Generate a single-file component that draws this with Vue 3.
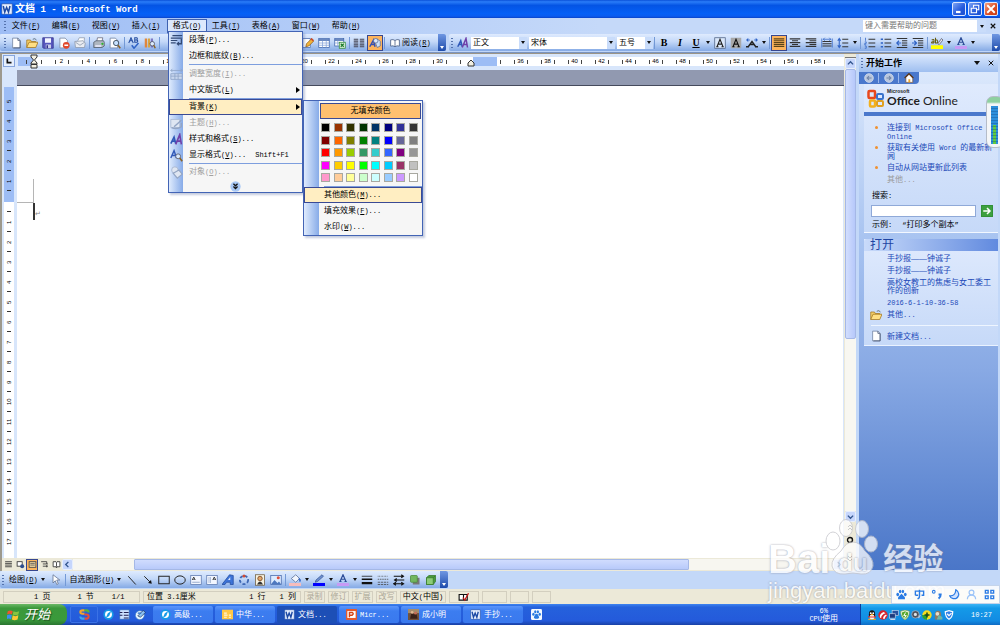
<script setup>
import { h } from 'vue'

/* Mixed text: Chinese runs and Latin runs get their own face; "_X" marks an access key. */
const T = ({ s }) =>
  h('span', { class: 'tx' }, s.match(/[\u2014\u2e80-\uffef]+|[^\u2014\u2e80-\uffef]+/g).map((run) => {
    if (/[\u2014\u2e80-\uffef]/.test(run)) return run
    const i = run.indexOf('_')
    if (i < 0) return h('span', { class: 'lat' }, run)
    return h('span', { class: 'lat' }, [run.slice(0, i), h('u', run[i + 1]), run.slice(i + 2)])
  }))
T.props = ['s']

const menus = ['文件(_F)', '编辑(_E)', '视图(_V)', '插入(_I)', '格式(_O)', '工具(_T)', '表格(_A)', '窗口(_W)', '帮助(_H)']

const lines = (a, x = 1, w = 14, c = '#333') => a.map((y) => `<path d="M${x} ${y}h${w}" stroke="${c}" stroke-width="1.5"/>`).join('')
const icons = {
  word: '<rect x="1" y="1" width="14" height="14" rx="1" fill="#e8f0ff" stroke="#2a54a8"/><path d="M3 4l2 8 2.500-6 2.500 6 2-8" fill="none" stroke="#1d4aa5" stroke-width="2"/>',
  new: '<path d="M3.500 1.500h7l3 3v10h-10z" fill="#fff" stroke="#6e7f9e"/><path d="M10.500 1.500v3h3M13.500 5v9.500h-9" fill="none" stroke="#3e4d6c"/>',
  open: '<path d="M1 14V4h5l1 2h6v3" fill="#f4cf6a" stroke="#a3741b"/><path d="M1 14l3-7h12l-3 7z" fill="#ffdf84" stroke="#a3741b"/><path d="M9 3q3-2 5 1" fill="none" stroke="#456" />',
  save: '<path d="M1 1h14v14H2l-1-1z" fill="#5757bd" stroke="#30308c"/><path d="M4 1.500h8v6H4z" fill="#f3f5ff"/><path d="M5 10h7v5H5z" fill="#c9cde8"/><path d="M6 11h2v4H6z" fill="#30308c"/>',
  perm: '<path d="M2.500 1.500h7l3 3v10h-10z" fill="#fff" stroke="#78859e"/><circle cx="11" cy="11" r="4.500" fill="#e2482b"/><path d="M8.500 11h5" stroke="#fff" stroke-width="2"/>',
  mail: '<path d="M5 5l2-4h7l-1 8" fill="#fff" stroke="#8b95a8"/><path d="M1 6l11-1 3 3-1 6H2z" fill="#e9ecf2" stroke="#8b95a8"/><path d="M2 7l6 4 6-4" fill="none" stroke="#8b95a8"/>',
  print: '<path d="M5 6l1-5h7l-1 5" fill="#fff" stroke="#667"/><path d="M1 7l3-2h10l1 2v5l-3 2H1z" fill="#aeb6c0" stroke="#4e5866"/><path d="M3 11h8v2H3z" fill="#eef"/><circle cx="12.500" cy="9" r="1.500" fill="#2db52d"/>',
  preview: '<path d="M1.500 1.500h7l3 3v10h-10z" fill="#fff" stroke="#6e7f9e"/><circle cx="9.500" cy="8" r="3.500" fill="#c8e2ff" stroke="#456" stroke-width="1.300"/><path d="M12 11l3 4" stroke="#8c6425" stroke-width="2"/>',
  spell: '<path d="M1 8l3-7 3 7M2 5h4M9 1v6h3q2-1.500 0-3H9h2.500q2-2 0-3z" fill="none" stroke="#234ca0" stroke-width="1.400"/><path d="M5 11l3 4 6-7" fill="none" stroke="#2f63c6" stroke-width="2"/>',
  research: '<path d="M1 2h3v12H1z" fill="#e0863c"/><path d="M5 2h3v12H5z" fill="#d9a441"/><path d="M9 2h3v12H9z" fill="#7d78c4"/><circle cx="11" cy="9" r="3" fill="#dcecff" stroke="#445"/><path d="M13 11l2 4" stroke="#8c6425" stroke-width="2"/>',
  edit: '<path d="M1 2h10v12H1z" fill="#fff" stroke="#4667a8"/><path d="M5 13l1-4 7-7 3 3-7 7z" fill="#f1b33a" stroke="#8c5b16"/><path d="M12 2l3 3" stroke="#d0432e" stroke-width="2"/>',
  table: '<rect x="1" y="2" width="14" height="12" fill="#fff" stroke="#3a62ab"/><path d="M1 3h14v2H1z" fill="#3a62ab"/><path d="M1 8h14M1 11h14M6 5v9M11 5v9" stroke="#86a4da"/>',
  excel: '<rect x="1" y="2" width="12" height="10" fill="#fff" stroke="#3a62ab"/><path d="M1 3h12v2H1z" fill="#3a62ab"/><path d="M1 8h12M5 5v7" stroke="#86a4da"/><rect x="7" y="7" width="8" height="8" fill="#dff2dc" stroke="#2c8a35"/><path d="M9 9l4 4M13 9l-4 4" stroke="#1c7a28" stroke-width="1.600"/>',
  cols: lines([3, 5.5, 8, 10.5, 13], 1, 6, '#445') + lines([3, 5.5, 8, 10.5, 13], 9, 6, '#445'),
  draw: '<path d="M1 13L6 4l2 9M3 10h5" fill="none" stroke="#324fb5" stroke-width="2"/><path d="M8 3h4l3 3v6l-4 2-2-5z" fill="#cfe0f6" stroke="#536c9b"/><circle cx="9" cy="5" r="3" fill="#dfe7f8" stroke="#536c9b"/>',
  book: '<path d="M8 4Q5 1.500 1 3v10q4-1.500 7 1 3-2.500 7-1V3q-4-1.500-7 1v10" fill="#fff" stroke="#4a5f86" stroke-width="1.300"/>',
  style: '<path d="M1 13L5 5l2 8M3 10h4" fill="none" stroke="#2f58b8" stroke-width="2"/><path d="M7 14l5-12 2 12M9 10h5" fill="none" stroke="#6f3fa8" stroke-width="2"/>',
  charA: '<rect x="1" y="1" width="14" height="14" fill="#dbe8fb" stroke="#4c5f80"/><path d="M4 13l4-10 4 10M5.500 9.500h5M3 13h3M10 13h3" fill="none" stroke="#222" stroke-width="1.500"/>',
  shadeA: '<rect x="1" y="1" width="14" height="14" fill="#a8a8a8"/><path d="M4 13l4-10 4 10M5.500 9.500h5M3 13h3M10 13h3" fill="none" stroke="#111" stroke-width="1.500"/>',
  scale: '<path d="M3 13l5-7 5 7M5 10h6M0 13h4M12 13h4" fill="none" stroke="#222" stroke-width="1.800"/><path d="M1 4h4M11 4h4M3 2L1 4l2 2M13 2l2 2-2 2" fill="none" stroke="#2f63c6" stroke-width="1.400"/>',
  just: lines([2.5, 5, 7.5, 10, 12.5], 1, 14, '#5b4418'),
  center: lines([2.5, 7.5, 12.5]) + lines([5, 10], 4, 8),
  right: lines([2.5, 7.5, 12.5]) + lines([5, 10], 6, 9),
  dist: '<path d="M1 2v12M15 2v12" stroke="#2f63c6"/>' + lines([6, 9, 12], 2, 12) + '<path d="M3 3h10M5 1L3 3l2 2M11 1l2 2-2 2" fill="none" stroke="#2f63c6"/>',
  spacing: lines([3, 8, 13], 7, 8) + '<path d="M3 2v12M1 5l2-3 2 3M1 11l2 3 2-3" fill="none" stroke="#2f63c6" stroke-width="1.400"/>',
  numlist: lines([3, 8, 13], 6, 9) + '<path d="M2 1v4M1 6.500h2v2H1v2h2M1 12h2v3H1" fill="none" stroke="#2f63c6"/>',
  bullist: lines([3, 8, 13], 6, 9) + '<path d="M1 2h3v2H1zM1 7h3v2H1zM1 12h3v2H1z" fill="#2f63c6"/>',
  outdent: lines([2, 14]) + lines([5, 8, 11], 8, 7) + '<path d="M7 8H1M4 5L1 8l3 3" fill="none" stroke="#2f63c6" stroke-width="1.600"/>',
  indent: lines([2, 14]) + lines([5, 8, 11], 8, 7) + '<path d="M0 8h6M3 5l3 3-3 3" fill="none" stroke="#2f63c6" stroke-width="1.600"/>',
  hilite: '<path d="M0 11h16v5H0z" fill="#ff0"/><path d="M1 4q3-2 3 1v3M4 6Q0 6 1 8h3M6 1v7h2q2-2 0-4H6" fill="none" stroke="#665d10" stroke-width="1.400"/><path d="M9 9l5-7 2 2-5 6z" fill="#e5e9f0" stroke="#556"/>',
  fontA: '<path d="M0 12h16v4H0z" fill="#c79af5"/><path d="M4 10l4-9 4 9M5.500 7h5M3 10h3M10 10h3" fill="none" stroke="#2c4c97" stroke-width="1.600"/>',
  para: '<path d="M3 2h12M1 5h14M1 8h8M1 11h6" stroke="#334a75" stroke-width="1.500"/><path d="M14 6v6H9M11 10l-2 2 2 2" fill="none" stroke="#334a75" stroke-width="1.600"/>',
  adj: '<path d="M1 3h14M3 1L1 3l2 2M13 1l2 2-2 2" fill="none" stroke="#8ea4c8"/><path d="M1 7h14v7H1zM1 10h14M6 7v7M10 7v7" fill="#c7d6ee" stroke="#8ea4c8"/>',
  theme: '<path d="M1 3h11v10H1z" fill="#dfe6f2" stroke="#a9b8d2"/><path d="M5 12l9-8M2 13q6 3 12-1V7" fill="none" stroke="#93a5c4" stroke-width="1.800"/>',
  reveal: '<path d="M1 11L5 2l3 9M2 8h5" fill="none" stroke="#315ab9" stroke-width="1.800"/><circle cx="10" cy="9" r="3" fill="#d6e7fc" stroke="#556"/><path d="M12 11l3 4" stroke="#8c6425" stroke-width="2"/>',
  object: '<circle cx="6" cy="5" r="4" fill="#dfe6f2" stroke="#a3b3cf"/><path d="M4 9l7-4 4 5-6 5z" fill="#dfe6f2" stroke="#93a5c4" stroke-width="1.400"/>',
  cursor: '<path d="M4 1v11l3-3 2 5 2-1-2-5h4z" fill="#fff" stroke="#5d6d8c"/>',
  line: '<path d="M3 3l10 11" stroke="#222" stroke-width="1.300"/>',
  arrow: '<path d="M3 3l8 8" stroke="#222" stroke-width="1.300"/><path d="M13 13l-5-1 4-4z" fill="#111"/>',
  rect: '<rect x="1" y="3" width="14" height="10" fill="none" stroke="#222" stroke-width="1.300"/>',
  oval: '<ellipse cx="8" cy="8" rx="7" ry="5.500" fill="none" stroke="#222" stroke-width="1.300"/>',
  textbox: '<rect x="1" y="2" width="14" height="12" fill="#f2f6ff" stroke="#5b77ad"/><path d="M3 8l2-4 2 4M3.500 7h3" fill="none" stroke="#222"/>' + lines([11], 3, 10, '#9aaccc'),
  vtextbox: '<rect x="1" y="2" width="14" height="12" fill="#f2f6ff" stroke="#5b77ad"/><path d="M9 8l2-4 2 4M9.500 7h3" fill="none" stroke="#222"/><path d="M4 4v8M6 4v8" stroke="#9aaccc"/>',
  wordart: '<path d="M0 14L10 1l5 1v12h-4v-3H6l-2 3z" fill="#3d74d8" stroke="#204a9d"/><path d="M8 8l3-4v4z" fill="#dce9ff"/>',
  diagram: '<circle cx="8" cy="8" r="5.500" fill="none" stroke="#3e68b5" stroke-width="2.500" stroke-dasharray="4 2.500"/><circle cx="8" cy="2.500" r="2" fill="#d24b33"/>',
  clip: '<rect x="2" y="1" width="12" height="14" fill="#f6f2e0" stroke="#6b5a3b"/><circle cx="8" cy="6" r="3" fill="#e3a66a" stroke="#6b3a16"/><path d="M4 14q4-8 8 0z" fill="#333"/>',
  pic: '<rect x="1" y="2" width="14" height="12" fill="#dcebff" stroke="#4667a8"/><path d="M1 14l5-6 4 4 2-2 3 4z" fill="#4d78bf"/><circle cx="11" cy="5" r="2" fill="#e04f39"/>',
  fill: '<path d="M0 12h16v4H0z" fill="#f6bcbc"/><path d="M3 6l6-5 5 5-5 5z" fill="#f1f5fc" stroke="#556c96"/><path d="M13 6q3 2 1 4" fill="none" stroke="#2f63c6" stroke-width="2"/>',
  linecolor: '<path d="M0 12h16v4H0z" fill="#00f"/><path d="M3 11l1-3 8-7 2 2-8 7z" fill="#6c8fd0" stroke="#3d5a94"/>',
  thick: '<path d="M1 3h14" stroke="#111"/><path d="M1 7h14" stroke="#111" stroke-width="2"/><path d="M1 12h14" stroke="#111" stroke-width="3"/>',
  dash: '<path d="M1 3h14" stroke="#444" stroke-dasharray="1 1"/><path d="M1 7h14" stroke="#444" stroke-dasharray="2 1"/><path d="M1 11h14M1 14h14" stroke="#444" stroke-dasharray="3 1"/>',
  arrows: '<path d="M1 3h12M3 8h12M1 13h14M11 1l3 2-3 2M5 6L2 8l3 2M11 11l3 2-3 2M4 11l-3 2 3 2" fill="none" stroke="#111" stroke-width="1.400"/>',
  shadow: '<rect x="5" y="5" width="9" height="9" fill="#777"/><rect x="2" y="2" width="9" height="9" rx="1" fill="#72b75e" stroke="#4a8a3b"/>',
  cube: '<path d="M2 5l3-3h9v8l-3 4H2z" fill="#4a9a3d" stroke="#357a2a"/><path d="M2 5h9v9H2z" fill="#8ccc78" stroke="#357a2a"/><path d="M11 5l3-3" stroke="#357a2a"/>',
  vNormal: lines([3, 6, 9, 12], 2, 12, '#333'),
  vWeb: '<rect x="2" y="3" width="9" height="8" fill="#fff" stroke="#333" stroke-width="1.500"/><circle cx="11" cy="11" r="3.500" fill="#2d4d8f"/>',
  vPage: '<rect x="2" y="3" width="12" height="10" fill="#f5d9a4" stroke="#444" stroke-width="1.500"/>' + lines([6, 9], 4, 8, '#555'),
  vOut: '<path d="M2 3h10v4M5 7h9M5 11h9M12 9v4" fill="none" stroke="#333" stroke-width="1.500"/>',
  vRead: '<path d="M2 3h5l1 1 1-1h5v9H9l-1 2-1-2H2zM8 4v8" fill="#fff" stroke="#333" stroke-width="1.500"/>',
  back: '<circle cx="8" cy="8" r="7" fill="#b9c6dd" stroke="#e6ecf6"/><path d="M12 8H5M8 5L5 8l3 3" fill="none" stroke="#7185a8" stroke-width="1.800"/>',
  fwd: '<circle cx="8" cy="8" r="7" fill="#b9c6dd" stroke="#e6ecf6"/><path d="M4 8h7M8 5l3 3-3 3" fill="none" stroke="#7185a8" stroke-width="1.800"/>',
  home: '<path d="M2 8l6-6 6 6v7H3V8" fill="#fff" stroke="#7c4a1e"/><path d="M1 8l7-7 7 7" fill="none" stroke="#5d3413" stroke-width="2"/><path d="M7 10h3v5H7z" fill="#f0a830"/>',
  go: '<rect x="0" y="0" width="16" height="16" rx="1" fill="#3da03f" stroke="#1f7a2a"/><path d="M3 8h9M8 4l4 4-4 4" fill="none" stroke="#fff" stroke-width="2"/>',
  proof: '<path d="M1 4h7v9H1zM8 4h6v9H8z" fill="#fff" stroke="#111" stroke-width="1.800"/><path d="M7 9l3 4 6-11" fill="none" stroke="#c51616" stroke-width="2"/>',
  winflag: '<path d="M1 4q3-2 6 0L6 8Q3 6 0 8z" fill="#f0562d"/><path d="M8 4q3 2 7 0l-1 4q-4 2-7 0z" fill="#86c440"/><path d="M0 9q3-2 6 0l-1 5q-3-2-6 0z" fill="#3a8ff0"/><path d="M7 9q3 2 7 0l-1 5q-4 2-7 0z" fill="#fcc833"/>',
  sbrand: '<g fill="none" stroke-width="3"><path d="M8 2H5Q2 2 2 4.500T5 7h3" stroke="#f2a52c"/><path d="M8 2h3q3 0 3 3" stroke="#5ab336"/><path d="M8 8h3q3 0 3 3t-3 3H8" stroke="#e44f36"/><path d="M8 14H5q-3 0-3-3" stroke="#3fa7ea"/></g>',
  compass: '<circle cx="8" cy="8" r="7.500" fill="#159be8"/><circle cx="8" cy="8" r="5" fill="#fff"/><path d="M12 3L9 10l-5 3 3-7z" fill="#159be8"/>',
  desk: '<path d="M1 1h14v14H1z" fill="#cde2ff" stroke="#2563b8"/><path d="M1 5h4M1 9h4M7 5h7M7 9h7M7 13h7" stroke="#225" stroke-width="1.500"/>',
  outlook: '<circle cx="7" cy="9" r="6.500" fill="#e8f4ff" stroke="#3879c7"/><path d="M4 10l8-8 3 3-7 7z" fill="#8cc2f2" stroke="#235"/><path d="M4 6h5" stroke="#2f74c8" stroke-width="2"/>',
  folder: '<path d="M0 1h16v14H0z" fill="#ffc845"/><path d="M3 6h4M3 9h5M3 12h4M10 9h3M10 12h3" stroke="#fff8e0" stroke-width="1.800"/>',
  ppt: '<rect width="16" height="16" rx="1" fill="#e35a2c"/><rect x="2" y="3" width="12" height="10" fill="#fff"/><path d="M5 12V5h4q3 2 0 4H5" fill="none" stroke="#d34317" stroke-width="2"/>',
  photo: '<rect width="16" height="16" fill="#70513b"/><path d="M0 0h16v6H0z" fill="#a58b6a"/><path d="M3 14l2-9 4 3 3-3 2 9z" fill="#3a2118"/><circle cx="6" cy="5" r="2" fill="#e2b58e"/><circle cx="11" cy="6" r="2" fill="#c56d58"/>',
  paw: '<rect width="16" height="16" rx="2" fill="#f4f9ff"/><ellipse cx="3.500" cy="7.500" rx="1.700" ry="2.200" fill="#2a7be0"/><ellipse cx="6.200" cy="4" rx="1.600" ry="2.200" fill="#2a7be0"/><ellipse cx="10" cy="4" rx="1.600" ry="2.200" fill="#2a7be0"/><ellipse cx="12.700" cy="7.500" rx="1.700" ry="2.200" fill="#2a7be0"/><path d="M8 7q2 0 3 3 2 3-1 4H6q-3-1-1-4 1-3 3-3z" fill="#2a7be0"/>',
  qq: '<ellipse cx="8" cy="7" rx="5" ry="6.500" fill="#151515"/><ellipse cx="8" cy="11" rx="4" ry="4" fill="#fff"/><path d="M2 9q6 3 12 0v3H2z" fill="#e32222"/><circle cx="6" cy="5" r="1.500" fill="#fff"/><circle cx="10" cy="5" r="1.500" fill="#fff"/><path d="M2 15h5M9 15h5M6 7.500h4" stroke="#f7a51c" stroke-width="2"/>',
  redball: '<circle cx="8" cy="8" r="7.500" fill="#d8232d"/><path d="M3 12Q2 6 9 3l3 2Q5 7 5 13zM8 14q0-5 5-7l1 2q-3 1-3 5z" fill="#fff"/>',
  net: '<rect x="5" y="1" width="10" height="8" fill="#28509c" stroke="#cfd8ea"/><rect x="1" y="6" width="9" height="7" fill="#1d3b7e" stroke="#cfd8ea"/><path d="M2 15h8" stroke="#cfd8ea" stroke-width="2"/>',
  shield: '<path d="M8 0l7 2q0 10-7 14Q1 12 1 2z" fill="#f4f7e8" stroke="#7da13a"/><path d="M8 2l5 2q0 7-5 10-5-3-5-10z" fill="#58a82c"/><path d="M9 4L6 9h4l-3 4" fill="none" stroke="#fff" stroke-width="1.600"/>',
  sound: '<circle cx="7" cy="7" r="6" fill="#4c535e" stroke="#b9c1cd"/><circle cx="7" cy="7" r="2.500" fill="#dde3ea"/><path d="M12 13l3-5" stroke="#c0c8d8" stroke-width="2"/>',
  plus: '<circle cx="8" cy="8" r="7.500" fill="#f6dd1e"/><path d="M0 8a8 8 0 008 8V8z" fill="#2aa135"/><path d="M8 4v8M4 8h8" stroke="#174b1c" stroke-width="2.500"/>',
  bird: '<path d="M3 15V8q0-7 5-7t5 7v7z" fill="#8f7b63"/><circle cx="7" cy="6" r="3" fill="#e9dccb"/><path d="M6 15l3-7 6 3v4z" fill="#6fb6a8"/>',
  vcheck: '<path d="M8 0l7 2q0 10-7 14Q1 12 1 2z" fill="#fff"/><path d="M8 2l5 1.500q0 7-5 10-5-3-5-10z" fill="#2f80e8"/><path d="M5 6l3 3 4-4" fill="none" stroke="#fff" stroke-width="2"/>',
  imePaw: '<ellipse cx="2.500" cy="8" rx="2" ry="2.500" fill="#2b7be4"/><ellipse cx="6" cy="3.500" rx="1.800" ry="2.500" fill="#2b7be4"/><ellipse cx="10" cy="3.500" rx="1.800" ry="2.500" fill="#2b7be4"/><ellipse cx="13.500" cy="8" rx="2" ry="2.500" fill="#2b7be4"/><path d="M8 7l5 5v3H3v-3z" fill="#2b7be4"/>',
  imeMid: '<path d="M2 9V3h12v6h-3M2 9h4M8 1v9q0 4-3 4" fill="none" stroke="#2b7be4" stroke-width="2"/>',
  imeDot: '<circle cx="4" cy="4" r="2" fill="none" stroke="#2b7be4" stroke-width="1.500"/><path d="M11 8h3q0 4-3 6" fill="none" stroke="#2b7be4" stroke-width="3"/>',
  imeMoon: '<path d="M10 1q5 3 4 8-2 6-8 5-4-1-5-4 8 1 9-9z" fill="#cfe2ff" stroke="#2b7be4" stroke-width="1.800"/>',
  imeUser: '<circle cx="8" cy="5" r="3.500" fill="none" stroke="#9cc4f8" stroke-width="1.800"/><path d="M2 15q0-6 6-6t6 6" fill="none" stroke="#9cc4f8" stroke-width="1.800"/>',
  imeGrid: '<path d="M2 2h4v4H2zM10 2h4v4h-4zM2 10h4v4H2zM10 10h4v4h-4z" fill="none" stroke="#2b7be4" stroke-width="2"/>',
}

const stdA = ['new', 'open', 'save', 'perm', 'mail', '|', 'print', 'preview', '|', 'spell', 'research', '|']
const stdB = ['edit', 'table', 'excel', '|', 'cols', 'draw*', '|']
const fmt = ['charA', 'shadeA', 'scale', 'v', '|', 'just*', 'center', 'right', 'dist', 'spacing', 'v', '|', 'numlist', 'bullist', 'outdent', 'indent', '|', 'hilite', 'v', 'fontA', 'v']
const drawing = ['line', 'arrow', 'rect', 'oval', 'textbox', 'vtextbox', 'wordart', 'diagram', 'clip', 'pic', '|', 'fill', 'v', 'linecolor', 'v', 'fontA', 'v', 'thick', 'dash', 'arrows', 'shadow', 'cube']
const fonts = [['样式', '正文', 'c1'], ['字体', '宋体', 'c2'], ['字号', '五号', 'c3']]

const formatMenu = [
  { t: '段落(_P)...', i: 'para' },
  { t: '边框和底纹(_B)...', sep: 2 },
  { t: '调整宽度(_I)...', i: 'adj', off: true },
  { t: '中文版式(_L)', sub: true, sep: 1 },
  { t: '背景(_K)', sub: true, on: true },
  { t: '主题(_H)...', i: 'theme', off: true },
  { t: '样式和格式(_S)...', i: 'style' },
  { t: '显示格式(_V)...', i: 'reveal', key: 'Shift+F1', sep: 1 },
  { t: '对象(_O)...', i: 'object', off: true },
]
const subMenu = [{ t: '其他颜色(_M)...', on: true }, { t: '填充效果(_F)...' }, { t: '水印(_W)...' }]
const colors = '000000 993300 333300 003300 003366 000080 333399 333333 800000 ff6600 808000 008000 008080 0000ff 666699 808080 ff0000 ff9900 99cc00 339966 33cccc 3366ff 800080 969696 ff00ff ffcc00 ffff00 00ff00 00ffff 00ccff 993366 c0c0c0 ff99cc ffcc99 ffff99 ccffcc ccffff 99ccff cc99ff ffffff'.split(' ')

/* The indent markers cover 32 and 34 on the ruler. */
const hNums = Array.from({ length: 29 }, (_, i) => 2 * i + 2)
const covered = (n) => n === 32 || n === 34
const vTop = [5, 4, 3, 2, 1]
const vNums = Array.from({ length: 17 }, (_, i) => i + 1)
const views = ['vNormal', 'vWeb', 'vPage', 'vOut', 'vRead']
const online = ['连接到 Microsoft Office Online', '获取有关使用 Word 的最新新闻', '自动从网站更新此列表']
const recent = ['手抄报——钟诚子', '手抄报——钟诚子', '高校女教工的焦虑与女工委工作的创新', '2016-6-1-10-36-58']
const modes = ['录制', '修订', '扩展', '改写']
const tasks = [['compass', '高级...'], ['folder', '中华...'], ['word', '文档...'], ['ppt', 'Micr...'], ['photo', '成小明'], ['word', '手抄...']]
const tray = ['qq', 'redball', 'net', 'shield', 'sound', 'plus', 'bird', 'vcheck']
const ime = ['imePaw', 'imeMid', 'imeDot', 'imeMoon', 'imeUser', 'imeGrid']
const name = (n) => n.replace('*', '')
</script>

<template>
  <div class="screen">
    <header class="title">
      <svg class="ic" viewBox="0 0 16 16" v-html="icons.word"></svg>
      <h1><T s="文档 1 - Microsoft Word" /></h1>
      <button class="wb" aria-label="最小化"><svg viewBox="0 0 16 16"><path d="M4 12h6" stroke="#fff" stroke-width="3" /></svg></button>
      <button class="wb" aria-label="还原"><svg viewBox="0 0 16 16"><path d="M6 6V3h7v6h-3M3 7h7v6H3z" fill="none" stroke="#fff" stroke-width="1.500" /></svg></button>
      <button class="wb red" aria-label="关闭"><svg viewBox="0 0 16 16"><path d="M3 3l10 10M13 3L3 13" stroke="#fff" stroke-width="2.500" /></svg></button>
    </header>

    <nav class="menubar">
      <i class="grip"></i>
      <button v-for="(m, i) in menus" :key="m" class="mb" :class="{ open: i === 4 }"><T :s="m" /></button>
      <div class="ask">
        <input type="text" value="键入需要帮助的问题" aria-label="键入需要帮助的问题" />
        <button aria-label="展开"><i class="dn"></i></button>
      </div>
      <button class="x" aria-label="关闭文档"><svg viewBox="0 0 8 8"><path d="M1 1l6 6M7 1L1 7" stroke="#111" stroke-width="1.500" /></svg></button>

      <div class="menu" role="menu">
        <template v-for="r in formatMenu" :key="r.t">
          <button class="row" :class="{ on: r.on, off: r.off }" role="menuitem">
            <span class="gut"><svg v-if="r.i" class="ic" viewBox="0 0 16 16" v-html="icons[r.i]"></svg></span>
            <T :s="r.t" />
            <span v-if="r.key" class="key"><T :s="r.key" /></span>
            <i v-if="r.sub" class="rt"></i>
          </button>
          <hr v-if="r.sep" :class="{ loose: r.sep === 2 }" />
        </template>
        <button class="more" aria-label="展开菜单"><svg viewBox="0 0 16 16"><circle cx="8" cy="8" r="7.500" fill="#a9c8f5" /><path d="M5 4l3 3 3-3M5 8l3 3 3-3" fill="none" stroke="#111" stroke-width="1.800" /></svg></button>

        <div class="submenu" role="menu">
          <button class="nofill">无填充颜色</button>
          <div class="palette">
            <button v-for="c in colors" :key="c" :style="{ background: '#' + c }" :aria-label="c"></button>
          </div>
          <hr />
          <button v-for="r in subMenu" :key="r.t" class="row" :class="{ on: r.on }" role="menuitem">
            <span class="gut"></span><T :s="r.t" />
          </button>
        </div>
      </div>
    </nav>

    <div class="bars">
      <div class="bar std">
        <i class="grip"></i>
        <template v-for="(b, i) in stdA" :key="i">
          <i v-if="b === '|'" class="sep"></i>
          <button v-else class="tb" :aria-label="b"><svg class="ic" viewBox="0 0 16 16" v-html="icons[b]"></svg></button>
        </template>
        <span class="under"></span>
        <template v-for="(b, i) in stdB" :key="'b' + i">
          <i v-if="b === '|'" class="sep"></i>
          <button v-else class="tb" :class="{ sel: b.endsWith('*') }" :aria-label="name(b)"><svg class="ic" viewBox="0 0 16 16" v-html="icons[name(b)]"></svg></button>
        </template>
        <button class="read"><svg class="ic" viewBox="0 0 16 16" v-html="icons.book"></svg><T s="阅读(_R)" /></button>
        <button class="cap" aria-label="工具栏选项"><i class="dn"></i></button>
      </div>
      <div class="bar format">
        <i class="grip"></i>
        <button class="tb" aria-label="样式和格式"><svg class="ic" viewBox="0 0 16 16" v-html="icons.style"></svg></button>
        <span v-for="f in fonts" :key="f[0]" class="combo" :class="f[2]">
          <select :aria-label="f[0]"><option>{{ f[1] }}</option></select><i class="dn"></i>
        </span>
        <i class="sep"></i>
        <button class="tb ltr"><b>B</b></button>
        <button class="tb ltr"><em>I</em></button>
        <button class="tb ltr"><u>U</u></button>
        <button class="drop" aria-label="下划线"><i class="dn"></i></button>
        <template v-for="(b, i) in fmt" :key="i">
          <i v-if="b === '|'" class="sep"></i>
          <button v-else-if="b === 'v'" class="drop" aria-label="更多"><i class="dn"></i></button>
          <button v-else class="tb" :class="{ sel: b.endsWith('*') }" :aria-label="name(b)"><svg class="ic" viewBox="0 0 16 16" v-html="icons[name(b)]"></svg></button>
        </template>
        <button class="cap" aria-label="工具栏选项"><i class="dn"></i></button>
      </div>
    </div>

    <main class="work">
      <section class="doc">
        <div class="hruler">
          <button class="tab" aria-label="制表符"><svg viewBox="0 0 12 12"><path d="M4 3v5h5" fill="none" stroke="#111" stroke-width="2" /></svg></button>
          <div class="scale">
            <span class="hm"><i></i></span>
            <span class="h0"><i></i></span>
            <span v-for="n in hNums" :key="n" class="hc"><i></i><b><template v-if="!covered(n)">{{ n }}</template></b><i></i></span>
            <span class="gap"></span>
            <svg class="hour" viewBox="0 0 8 15"><path d="M1 1h6v2L4.500 6 7 9v1H1V9l2.500-3L1 3zM1 10.500h6v3.500H1z" fill="#f2efe2" stroke="#333" /></svg>
            <svg class="tri" viewBox="0 0 8 8"><path d="M4 1L1 4v3h6V4z" fill="#f2efe2" stroke="#333" /></svg>
          </div>
        </div>
        <div class="pagearea">
          <div class="vruler">
            <div class="vt"><span v-for="n in vTop" :key="n"><b>{{ n }}</b><i></i></span></div>
            <div class="vb"><span v-for="n in vNums" :key="n"><i></i><b>{{ n }}</b></span></div>
          </div>
          <div class="canvas">
            <div class="desk"></div>
            <article class="page"><i class="ch"></i><i class="cv"></i><i class="caret"></i><span class="ret">↵</span></article>
          </div>
        </div>
        <div class="hscroll">
          <button v-for="(v, i) in views" :key="v" class="view" :class="{ sel: i === 2 }" :aria-label="v"><svg viewBox="0 0 16 16" v-html="icons[v]"></svg></button>
          <button class="sb" aria-label="向左"><svg viewBox="0 0 8 8"><path d="M5 1L2 4l3 3" fill="none" stroke="#33558f" stroke-width="1.600" /></svg></button>
          <div class="track"><div class="thumb"></div></div>
          <button class="sb" aria-label="向右"><svg viewBox="0 0 8 8"><path d="M3 1l3 3-3 3" fill="none" stroke="#33558f" stroke-width="1.600" /></svg></button>
        </div>
      </section>

      <div class="vscroll">
        <div class="split"></div>
        <button class="sb" aria-label="向上"><svg viewBox="0 0 8 8"><path d="M1 5l3-3 3 3" fill="none" stroke="#33558f" stroke-width="1.600" /></svg></button>
        <div class="vtrack"><div class="vthumb"></div></div>
        <button class="sb" aria-label="向下"><svg viewBox="0 0 8 8"><path d="M1 3l3 3 3-3" fill="none" stroke="#33558f" stroke-width="1.600" /></svg></button>
        <button class="nv" aria-label="前一页"><svg viewBox="0 0 8 8"><path d="M2 3l2-2 2 2M2 6l2-2 2 2" fill="none" stroke="#333" /></svg></button>
        <button class="nv" aria-label="选择浏览对象"><svg viewBox="0 0 8 8"><circle cx="4" cy="4" r="2.500" fill="none" stroke="#111" stroke-width="1.400" /></svg></button>
        <button class="nv" aria-label="下一页"><svg viewBox="0 0 8 8"><path d="M2 1l2 2 2-2M2 4l2 2 2-2" fill="none" stroke="#333" /></svg></button>
      </div>

      <aside class="pane">
        <div class="ptitle"><i class="grip"></i><h2>开始工作</h2><i class="dn"></i><button class="x" aria-label="关闭任务窗格"><svg viewBox="0 0 8 8"><path d="M1 1l6 6M7 1L1 7" stroke="#111" stroke-width="1.300" /></svg></button></div>
        <div class="pbody">
          <div class="pnav">
            <button aria-label="后退"><svg viewBox="0 0 16 16" v-html="icons.back"></svg></button>
            <button aria-label="前进"><svg viewBox="0 0 16 16" v-html="icons.fwd"></svg></button>
            <button aria-label="主页"><svg viewBox="0 0 16 16" v-html="icons.home"></svg></button>
          </div>
          <section class="card one">
            <div class="logo">
              <svg viewBox="0 0 18 20"><rect x="1.500" y="2" width="6.500" height="7" rx="1" fill="none" stroke="#e8481d" stroke-width="2.500" /><rect x="10" y="5" width="6" height="5" rx="1" fill="none" stroke="#3a74cc" stroke-width="2" /><rect x="3" y="11.500" width="5" height="6" rx="1" fill="none" stroke="#f2b01e" stroke-width="2.500" /><rect x="10" y="12" width="6" height="5" rx="1" fill="none" stroke="#e0a020" stroke-width="2" /></svg>
              <div><small>Microsoft</small><p><b>Office</b> Online</p></div>
            </div>
            <ul class="bul"><li v-for="o in online" :key="o"><a href="#"><T :s="o" /></a></li></ul>
            <p class="mo"><T s="其他..." /></p>
            <label for="q"><T s="搜索:" /></label>
            <div class="search"><input id="q" type="text" /><button aria-label="搜索"><svg viewBox="0 0 16 16" v-html="icons.go"></svg></button></div>
            <p class="eg"><T s="示例:" /><T s="“打印多个副本”" /></p>
          </section>
          <section class="card two">
            <h3>打开</h3>
            <ul class="rec">
              <li v-for="(r, i) in recent" :key="i"><a href="#"><T :s="r" /></a></li>
              <li><svg viewBox="0 0 16 16" v-html="icons.open"></svg><a href="#"><T s="其他..." /></a></li>
            </ul>
            <hr />
            <p class="nd"><svg viewBox="0 0 16 16" v-html="icons.new"></svg><a href="#"><T s="新建文档..." /></a></p>
          </section>
        </div>
        <div class="gauge"><i></i></div>
      </aside>
    </main>

    <div class="drawrow">
      <div class="bar dbar">
        <i class="grip"></i>
        <button class="txt"><T s="绘图(_D)" /><i class="dn"></i></button>
        <button class="tb" aria-label="选择对象"><svg class="ic" viewBox="0 0 16 16" v-html="icons.cursor"></svg></button>
        <i class="sep"></i>
        <button class="txt"><T s="自选图形(_U)" /><i class="dn"></i></button>
        <template v-for="(b, i) in drawing" :key="i">
          <i v-if="b === '|'" class="sep"></i>
          <button v-else-if="b === 'v'" class="drop" aria-label="更多"><i class="dn"></i></button>
          <button v-else class="tb" :aria-label="b"><svg class="ic" viewBox="0 0 16 16" v-html="icons[b]"></svg></button>
        </template>
        <button class="cap" aria-label="工具栏选项"><i class="dn"></i></button>
      </div>
    </div>

    <footer class="status">
      <div class="st s1"><T s="1 页" /><T s="1 节" /><T s="1/1" /></div>
      <div class="st s2"><T s="位置 3.1厘米" /><span class="rc"><T s="1 行" /><T s="1 列" /></span></div>
      <div v-for="m in modes" :key="m" class="st md">{{ m }}</div>
      <div class="st lang"><T s="中文(中国)" /></div>
      <div class="st pf"><svg viewBox="0 0 16 16" v-html="icons.proof"></svg></div>
      <div class="st e1"></div><div class="st e2"></div><div class="st e2"></div>
    </footer>

    <footer class="taskbar">
      <button class="start"><svg viewBox="0 0 16 16" v-html="icons.winflag"></svg>开始</button>
      <button class="ql first" aria-label="输入法"><svg viewBox="0 0 16 16" v-html="icons.sbrand"></svg></button>
      <button v-for="q in ['compass', 'desk', 'outlook']" :key="q" class="ql" :aria-label="q"><svg viewBox="0 0 16 16" v-html="icons[q]"></svg></button>
      <div class="tasks">
        <button v-for="(t, i) in tasks" :key="t[1]" class="task" :class="{ act: i === 2 }"><svg viewBox="0 0 16 16" v-html="icons[t[0]]"></svg><T :s="t[1]" /></button>
      </div>
      <button class="ql" aria-label="百度"><svg viewBox="0 0 16 16" v-html="icons.paw"></svg></button>
      <div class="cpu"><T s="6%" /><T s="CPU使用" /></div>
      <div class="tray"><svg v-for="t in tray" :key="t" viewBox="0 0 16 16" v-html="icons[t]"></svg><time><T s="10:27" /></time></div>
    </footer>

    <div class="ime"><svg v-for="m in ime" :key="m" viewBox="0 0 16 16" v-html="icons[m]"></svg></div>
    <div class="mark">
      <div class="brand">
        <span>Bai</span>
        <span class="pw">
          <svg viewBox="0 0 54 58"><g fill="#fff" stroke="#c4c4ca"><ellipse cx="8" cy="22" rx="7" ry="9" /><ellipse cx="21" cy="9" rx="6.500" ry="8.500" /><ellipse cx="37" cy="10" rx="6.500" ry="8.500" /><ellipse cx="46" cy="25" rx="6.500" ry="8" /><path d="M28 23q7 0 12 9 9 8 8 15-2 9-12 8-8-2-16 0-11 1-13-8-1-7 9-15 5-9 12-9z" /></g></svg>
          <b>du</b>
        </span>
        <span class="jy">经验</span>
      </div>
      <div class="url">jingyan.baidu.com</div>
    </div>
  </div>
</template>

<style>
html, body { overflow: hidden; }
.tx { white-space: inherit; }
.tx .lat { font-family: "Liberation Mono", monospace; font-size: 7px; line-height: 0; }
.title .tx .lat { font-size: 9px; white-space: pre; }
</style>

<style scoped>
* { box-sizing: border-box; }
.screen { position: relative; display: flex; flex-direction: column; height: 100vh; overflow: hidden; background: #c3d8f8; font: 8px/10px "Liberation Sans", "Noto Sans CJK SC", sans-serif; color: #000; }
button, input, select { font: inherit; color: inherit; margin: 0; padding: 0; border: 0; background: none; border-radius: 0; outline: 0; }
h1, h2, h3, p, ul { margin: 0; padding: 0; font-weight: normal; font-size: inherit; list-style: none; }
a { color: #2149b8; text-decoration: none; }
svg { display: block; flex: none; }
i { font-style: normal; flex: none; }
.ic { width: 12px; height: 12px; }
.dn { width: 0; height: 0; border: 2px solid transparent; border-top: 3px solid #111; border-bottom: 0; }
.grip { width: 2px; height: 10px; margin: 0 2px; background: repeating-linear-gradient(#5673ad 0 1px, transparent 1px 3px); }
.sep { width: 1px; height: 12px; margin: 0 1px; background: #7399d6; }

.title { display: flex; align-items: center; gap: 2px; height: 18px; padding: 0 2px 0 1px; background: linear-gradient(#0a50d8, #2a7cf8 10%, #0454e4 30%, #0560f6 75%, #0a5cf0 90%, #0a43c8); }
.title h1 { flex: 1; color: #fff; font-size: 10px; font-weight: bold; }
.wb { width: 14px; height: 14px; border: 1px solid #dbe6ff; border-radius: 2px; background: linear-gradient(135deg, #7ea4f4, #2258dc 60%, #1c50cf); }
.wb svg { width: 12px; height: 12px; }
.wb.red { background: linear-gradient(135deg, #f2a07f, #dc4a22 60%, #c63b14); }

.menubar { position: relative; z-index: 5; display: flex; align-items: center; height: 16px; background: linear-gradient(90deg, #9ebdf5, #c5d9f9 60%); }
.menubar > .grip { margin: 0 0 0 4px; }
.mb { width: 40px; height: 14px; border: 1px solid transparent; white-space: nowrap; }
.mb.open { position: relative; margin: 0 -1px 0 1px; height: 15px; background: #dce8fc; border-color: #3f62b0; border-bottom-color: #dce8fc; }
.ask { display: flex; width: 123px; height: 12px; margin-left: auto; background: #fff; }
.ask input { flex: 1; min-width: 0; padding-left: 2px; color: #777; }
.ask button { width: 9px; background: #c9dcfa; display: flex; align-items: center; justify-content: center; }
.x { width: 8px; height: 8px; margin: 0 3px; }
.x svg { width: 6px; height: 6px; margin: 1px; }

.menu { position: absolute; left: 168px; top: 13px; width: 135px; padding: 0; border: 1px solid #4364b5; background: linear-gradient(90deg, #dfebfd, #87abe8 14px, #f6f6f6 14px); box-shadow: 2px 2px 2px rgba(90, 110, 160, .35); }
.row { position: relative; display: flex; align-items: center; width: 100%; height: 16px; border: 1px solid transparent; white-space: nowrap; }
.row.on { background: #ffeec2; border-color: #3a4a94; }
.row.off { color: #a0a0a0; }
.gut { width: 18px; margin-right: 1px; flex: none; }
.gut .ic { width: 13px; height: 13px; }
.key { margin-left: 9px; }
.rt { margin-left: auto; margin-right: 1px; border: 3px solid transparent; border-left: 4px solid #000; border-right: 0; }
hr { height: 1px; margin: 0 0 0 20px; border: 0; background: #7d9ede; }
hr.loose { margin-bottom: 1px; }
.more { display: block; width: 100%; height: 12px; padding-left: 61px; }
.more svg { width: 11px; height: 11px; }
.submenu { position: absolute; left: 134px; top: 68px; width: 120px; padding: 2px 0 0; border: 1px solid #4364b5; background: linear-gradient(90deg, #dfebfd, #87abe8 15px, #f6f6f6 15px); box-shadow: 2px 2px 2px rgba(90, 110, 160, .35); }
.nofill { display: block; width: 101px; height: 16px; margin-left: 16px; background: #ffc06f; border: 1px solid #3a4a94; }
.palette { display: grid; grid-template-columns: repeat(8, 9px); justify-content: space-between; align-content: space-between; width: 97px; height: 59px; margin: 4px 0 4px 17px; }
.palette button { height: 9px; border: 1px solid #a8a8a0; }

.bars { display: flex; gap: 3px; height: 19px; padding-bottom: 1px; border-bottom: 1px solid #7b94bf; background: #bfd5f8; }
.bar { display: flex; align-items: center; height: 17px; background: linear-gradient(#dfebfe, #c3d8f8 45%, #85aae5); border-radius: 2px; overflow: hidden; }
.std { width: 446px; padding-left: 2px; }
.format { flex: 1; }
.tb { width: 16px; height: 16px; display: flex; align-items: center; justify-content: center; flex: none; }
.tb.sel { background: #fdb45c; border: 1px solid #37478f; }
.under { flex: 1; }
.read { display: flex; align-items: center; gap: 2px; width: 52px; padding-left: 4px; white-space: nowrap; }
.read .ic { width: 10px; height: 10px; }
.cap { width: 8px; height: 17px; background: linear-gradient(#6f97e2, #1d4bab); display: flex; align-items: flex-end; justify-content: center; padding-bottom: 2px; flex: none; margin-left: auto; }
.cap .dn { border-top-color: #fff; }
.drop { width: 8px; height: 16px; display: flex; align-items: center; justify-content: center; flex: none; }
.combo { display: flex; align-items: center; height: 12px; margin-right: 2px; background: linear-gradient(90deg, #fff calc(100% - 8px), #c9dcfa 0); }
.combo select { appearance: none; flex: 1; min-width: 0; padding-left: 2px; }
.combo .dn { margin: 0 2px; }
.c1 { width: 56px; } .c2 { width: 86px; } .c3 { width: 36px; margin-right: 0; }
.ltr { font: 10px/12px "Liberation Serif", serif; }
.ltr u, .ltr em { font-weight: bold; }

.work { flex: 1; display: flex; min-height: 0; border-top: 1px solid #9b9486; border-left: 2px solid #9d998d; }
.doc { flex: 1; min-width: 0; display: flex; flex-direction: column; background: #d8e6fb; }
.hruler { display: flex; height: 16px; padding-top: 1px; flex: none; }
.tab { width: 12px; height: 12px; margin: 0 3px 0 1px; border: 1px solid #86a5dc; background: #e6effd; }
.tab svg { width: 10px; height: 10px; }
.scale { position: relative; flex: 1; min-width: 0; display: flex; height: 9px; margin-top: 2px; background: #fff; font-size: 6px; line-height: 9px; }
.scale i { width: 1px; height: 4px; background: #444; }
.scale b { font-weight: normal; width: 8px; text-align: center; }
.hm { width: 16px; flex: none; background: #9dbdf5; display: flex; align-items: center; justify-content: center; }
.h0 { width: 14px; flex: none; display: flex; align-items: center; justify-content: center; }
.hc { flex: none; width: 27px; display: flex; align-items: center; justify-content: center; gap: 2px; }
.gap { position: absolute; left: 455px; top: 0; width: 24px; height: 9px; background: #9dbdf5; }
.hour { position: absolute; left: 12px; top: -3px; width: 8px; height: 15px; }
.tri { position: absolute; left: 449px; top: 2px; width: 8px; height: 8px; }
.pagearea { flex: 1; display: flex; min-height: 0; }
.vruler { width: 15px; margin-top: 17px; padding: 0 3px 0 2px; overflow: hidden; font-size: 6px; line-height: 10px; }
.vruler div { display: flex; flex-direction: column; }
.vt { background: #9dbdf5; height: 115px; padding-top: 9px; }
.vb { background: #fff; height: 380px; padding-top: 5px; }
.vruler span { display: flex; flex-direction: column; align-items: center; flex: none; height: 20px; }
.vruler b { height: 10px; font-weight: normal; writing-mode: vertical-rl; rotate: 180deg; text-align: center; }
.vruler i { width: 4px; height: 1px; margin: 4px 0 5px; background: #333; }
.canvas { flex: 1; display: flex; flex-direction: column; }
.desk { height: 16px; background: #9199b0; border-bottom: 1px solid #454a5c; }
.page { position: relative; flex: 1; background: #fff; margin-right: 1px; }
.page i { position: absolute; background: #b5b5b5; }
.ch { left: 0; top: 116px; width: 17px; height: 1px; }
.cv { left: 16px; top: 93px; width: 1px; height: 24px; }
.page .caret { left: 16px; top: 117px; width: 2px; height: 17px; background: #333; }
.ret { position: absolute; left: 18px; top: 123px; font-size: 7px; color: #888; font-family: "DejaVu Sans", sans-serif; }
.hscroll { display: flex; align-items: center; height: 13px; flex: none; background: #ece9d8; }
.view { width: 12px; height: 12px; flex: none; } .view.sel { background: #fdb45c; border: 1px solid #37478f; }
.view svg { width: 9px; height: 9px; margin: auto; }
.sb { width: 11px; height: 11px; flex: none; background: #c6d6fc; border: 1px solid #e6eefe; border-radius: 2px; }
.sb svg { width: 7px; height: 7px; margin: auto; }
.track { flex: 1; height: 11px; background: #f7f6f0; }
.thumb { width: 73%; height: 11px; margin-left: 8%; background: linear-gradient(#d0dcfe, #b8cafa); border: 1px solid #a5b8e6; border-radius: 1px; }
.vscroll { width: 12px; display: flex; flex-direction: column; align-items: center; background: #ece9d8; }
.split { width: 11px; height: 4px; background: #ece9d8; border-bottom: 1px solid #777; }
.vtrack { flex: 1; width: 11px; background: #f8f7f1; }
.vthumb { height: 61%; background: linear-gradient(90deg, #d2defe, #b6c8fa); border: 1px solid #a5b8e6; border-radius: 2px; }
.nv { width: 11px; height: 12px; } .nv svg { width: 8px; height: 8px; margin: auto; }
.nv:last-child { height: 25px; }

.pane { position: relative; width: 144px; display: flex; flex-direction: column; border-left: 3px solid #c3d8f8; border-right: 2px solid #c3d8f8; margin-bottom: 1px; }
.ptitle { display: flex; align-items: center; height: 18px; background: linear-gradient(#dce9fd, #9fbff0); }
.ptitle h2 { flex: 1; margin-left: 1px; font-size: 9px; font-weight: bold; }
.ptitle .dn { border-width: 3px; border-top-width: 4px; border-bottom: 0; margin-right: 4px; }
.pbody { flex: 1; background: linear-gradient(#dbe8fc, #a6c2f0 35%, #88a9e4 60%, #4a76c8); }
.pnav { display: flex; width: 60px; height: 12px; background: #4a78cc; border-radius: 0 0 4px 0; }
.pnav button { width: 20px; height: 10px; margin: 1px 0; border-right: 1px solid #9bb8ec; }
.pnav button:last-child { border: 0; }
.pnav svg { width: 10px; height: 10px; margin: auto; }
.card { margin-left: 5px; background: linear-gradient(#dfeafd, #c6d9f8); }
.one { height: 149px; border-bottom: 1px solid #f2f7ff; }
.logo { display: flex; height: 32px; padding: 5px 0 0 3px; border-bottom: 4px solid #4a78cc; }
.logo svg { width: 18px; height: 20px; }
.logo div { margin-left: 2px; color: #222; }
.logo small { display: block; font-size: 5px; line-height: 5px; font-weight: bold; }
.logo p { font: 12px/14px Lato, sans-serif; white-space: nowrap; }
.bul { display: flex; flex-direction: column; gap: 2px; padding: 7px 3px 0 23px; line-height: 9px; }
.bul li { position: relative; }
.bul li::before { content: ""; position: absolute; left: -12px; top: 3px; width: 3px; height: 3px; border-radius: 2px; background: #f09030; }
.mo { margin: 3px 0 0 23px; color: #999; }
.card label { display: block; margin: 6px 0 4px 8px; }
.search { display: flex; gap: 5px; margin-left: 7px; }
.search input { width: 105px; height: 12px; background: #fff; border: 1px solid #8fa9d8; }
.search svg { width: 12px; height: 12px; }
.eg { display: flex; gap: 10px; margin: 3px 0 0 8px; }
.two { margin-top: 6px; border-bottom: 1px solid #eaf2ff; }
.two h3 { height: 12px; padding-left: 6px; font-size: 12px; line-height: 12px; color: #1f45a2; background: linear-gradient(90deg, #c9dbfa, #618adf); border-radius: 3px 0 0 0; }
.rec { padding: 2px 3px 0 23px; line-height: 8px; }
.rec li, .nd { position: relative; padding: 2px 0; }
.rec svg, .nd svg { position: absolute; left: -17px; top: 0; width: 12px; height: 12px; }
.two hr { margin: 4px 0 4px 7px; background: #eef5ff; }
.nd { margin-left: 23px; padding-bottom: 3px; }
.gauge { position: absolute; left: 127px; top: 42px; width: 18px; height: 52px; padding: 9px 5px 3px 4px; border: 1px solid #b5bcc8; border-radius: 7px; background: linear-gradient(#8ed0a0 5px, #f4f6f8 7px); }
.gauge i { display: block; width: 7px; height: 38px; background: repeating-linear-gradient(transparent 0 2px, rgba(20, 80, 140, .4) 2px 3px), linear-gradient(90deg, #2c8fdc 2px, transparent 2px 5px, #2c8fdc 5px), linear-gradient(#2c8fdc 50%, #62cc3e 50%); }

.drawrow { height: 18px; flex: none; background: #c3d8f8; }
.dbar { width: 448px; }
.txt { display: flex; align-items: center; gap: 3px; margin: 0 3px; white-space: nowrap; }

.status { display: flex; align-items: center; gap: 3px; height: 15px; padding-left: 3px; background: #ece9d8; flex: none; }
.st { height: 12px; border: 1px solid #d3cfbf; line-height: 10px; white-space: nowrap; }
.s1 { width: 137px; display: flex; gap: 27px; padding-left: 30px; } .s1 > :last-child { margin-left: -9px; }
.s2 { width: 158px; display: flex; padding: 0 4px 0 3px; }
.rc { margin-left: auto; display: flex; gap: 14px; }
.md { width: 21px; color: #aca899; text-align: center; }
.lang { width: 46px; text-align: center; } .pf { width: 30px; padding-left: 7px; } .pf svg { width: 13px; height: 10px; }
.e1 { width: 25px; } .e2 { width: 19px; }

.taskbar { display: flex; align-items: center; height: 21px; flex: none; color: #fff; background: linear-gradient(#3f84f0, #2561dc 15%, #245adb 80%, #1941a5); }
.start { display: flex; align-items: center; gap: 4px; width: 67px; height: 21px; padding-left: 7px; font-size: 13px; font-style: italic; background: linear-gradient(#6bb866, #3b983b 20%, #3a9a3b 75%, #2a7530); border-radius: 0 8px 8px 0; text-shadow: 1px 1px 1px #1d4b1d; }
.start svg { width: 13px; height: 13px; }
.ql { width: 16px; height: 17px; } .ql svg { width: 11px; height: 11px; margin: auto; }
.ql.first { width: 28px; margin: 0 2px 0 3px; border: 1px solid #3b72e6; border-radius: 2px; }
.tasks { display: flex; gap: 2px; margin: 0 5px; }
.task { display: flex; align-items: center; gap: 3px; width: 60px; height: 17px; padding-left: 7px; background: linear-gradient(#5b95fb, #3c7df0 30%, #3a79ee); border-radius: 2px; white-space: nowrap; }
.task svg { width: 11px; height: 11px; }
.task.act { background: #1d4fb6; }
.cpu { display: flex; flex-direction: column; align-items: center; margin-left: auto; line-height: 8px; }
.tray { display: flex; align-items: center; gap: 1px; width: 140px; height: 21px; margin-left: 22px; padding-left: 6px; border-left: 1px solid #0b3c9c; background: linear-gradient(#3cb4f5, #149ae8 20%, #128be2 80%, #0f6cc4); }
.tray svg { width: 10px; height: 10px; }
.tray time { margin-left: auto; margin-right: 8px; }

.ime { position: absolute; z-index: 8; right: 0; bottom: 21px; display: flex; align-items: center; justify-content: space-around; width: 109px; height: 19px; padding: 0 1px; background: rgba(255, 255, 255, .85); border: 1px solid #c5d4ea; }
.ime svg { width: 11px; height: 11px; }
.mark { position: absolute; z-index: 7; left: 768px; bottom: 20px; color: #fff; opacity: .75; pointer-events: none; text-shadow: 0 0 2px #778; white-space: nowrap; }
.brand { display: flex; align-items: flex-end; height: 58px; font: bold 40px/36px "Liberation Sans", "Noto Sans CJK SC", sans-serif; }
.pw { position: relative; width: 54px; height: 58px; margin-left: -5px; }
.pw svg { width: 54px; height: 58px; }
.pw b { position: absolute; left: 13px; bottom: 1px; font-size: 24px; line-height: 26px; color: #fff; }
.jy { font-size: 30px; margin-left: 4px; }
.url { font-size: 22px; line-height: 28px; }
</style>
